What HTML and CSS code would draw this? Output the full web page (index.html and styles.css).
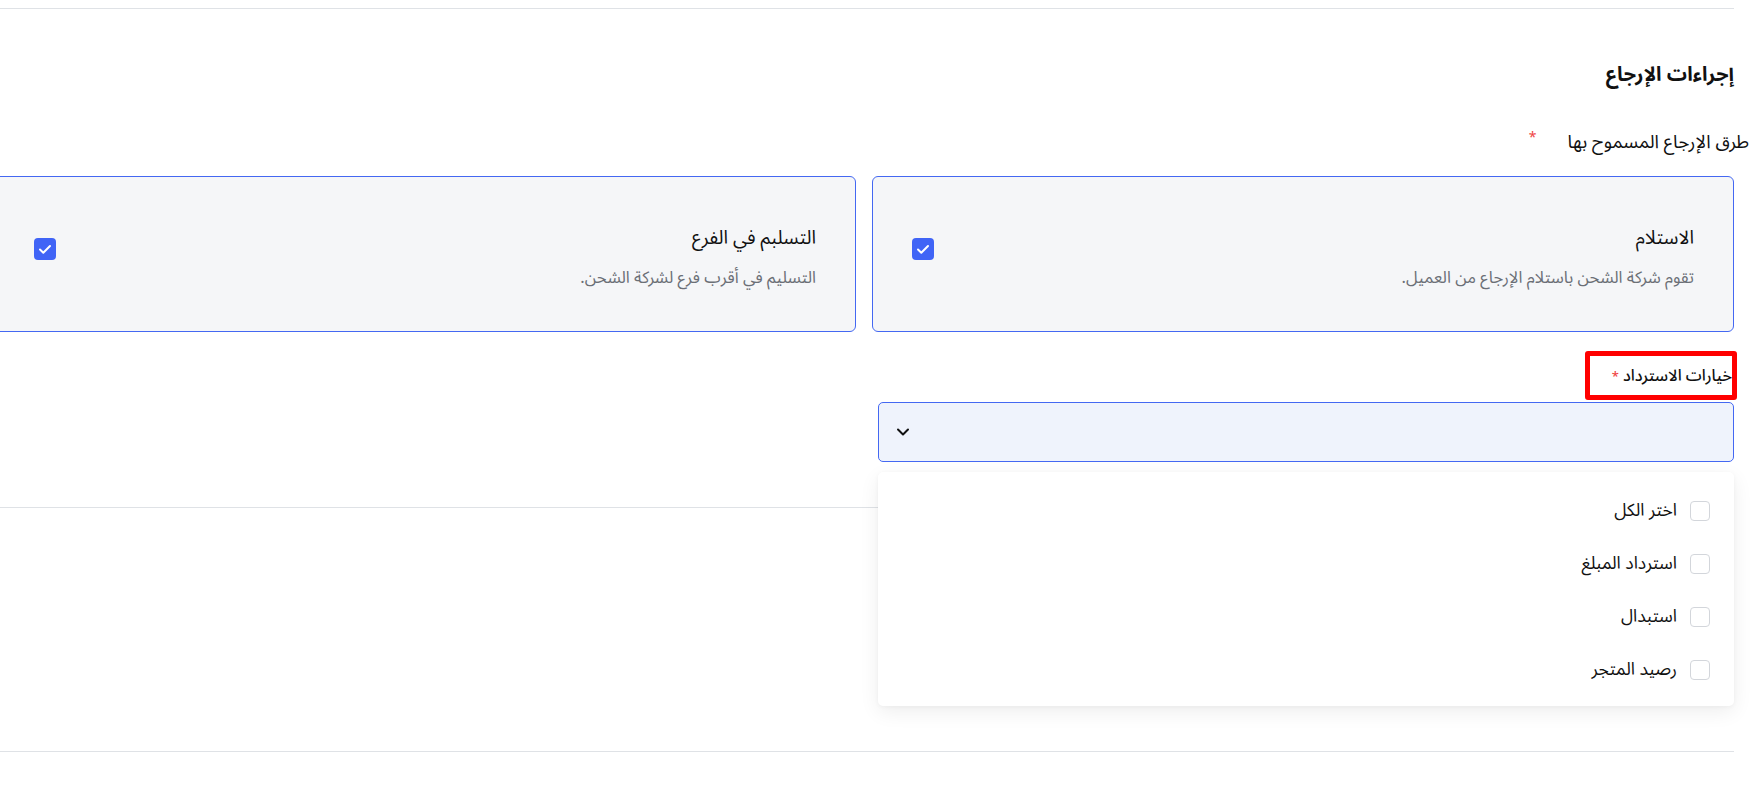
FILE: index.html
```html
<!DOCTYPE html>
<html lang="ar">
<head>
<meta charset="utf-8">
<title>إجراءات الإرجاع</title>
<link rel="stylesheet" href="styles.css">
</head>
<body>
<div class="page" dir="rtl">
  <div class="rule rule-top"></div>
  <section class="section">
    <h2 class="heading">إجراءات الإرجاع</h2>
    <div class="field-label"><span>طرق الإرجاع المسموح بها</span><span class="req">*</span></div>
    <div class="cards">
      <div class="card">
        <div class="card-text">
          <div class="card-title">الاستلام</div>
          <div class="card-desc">تقوم شركة الشحن باستلام الإرجاع من العميل.</div>
        </div>
        <span class="check checked"><svg viewBox="0 0 22 22" width="22" height="22"><path d="M6 11.5l3.3 3.2L16 8" fill="none" stroke="#fff" stroke-width="2" stroke-linecap="round" stroke-linejoin="round"/></svg></span>
      </div>
      <div class="card">
        <div class="card-text">
          <div class="card-title">التسلبم في الفرع</div>
          <div class="card-desc">التسليم في أقرب فرع لشركة الشحن.</div>
        </div>
        <span class="check checked"><svg viewBox="0 0 22 22" width="22" height="22"><path d="M6 11.5l3.3 3.2L16 8" fill="none" stroke="#fff" stroke-width="2" stroke-linecap="round" stroke-linejoin="round"/></svg></span>
      </div>
    </div>
    <div class="refund-label"><span class="marked">خيارات الاسترداد<span class="req2">*</span></span></div>
    <div class="select-wrap">
      <div class="select">
        <svg class="chev" viewBox="0 0 14 10" width="14" height="10"><path d="M2 2.5l5 5 5-5" fill="none" stroke="#111" stroke-width="2" stroke-linecap="round" stroke-linejoin="round"/></svg>
      </div>
      <div class="dropdown">
        <div class="opt"><span class="box"></span><span>اختر الكل</span></div>
        <div class="opt"><span class="box"></span><span>استرداد المبلغ</span></div>
        <div class="opt"><span class="box"></span><span>استبدال</span></div>
        <div class="opt"><span class="box"></span><span>رصيد المتجر</span></div>
      </div>
    </div>
  </section>
  <div class="rule rule-mid"></div>
  <div class="spacer"></div>
  <div class="rule"></div>
</div>
</body>
</html>
```
FILE: styles.css
```css
html, body {
  margin: 0;
  padding: 0;
  background: #fff;
}
body {
  font-family: "Noto Sans Arabic", "DejaVu Sans", "Noto Sans", sans-serif;
  color: #111;
  overflow: hidden;
}
.page {
  width: 1734px;
}
.rule {
  height: 0;
  border-top: 1px solid #dfe2e6;
}
.rule-top {
  margin-top: 8px;
}
.section {
  padding-top: 51px;
}
.heading {
  margin: 0;
  font-size: 20px;
  font-weight: 700;
  line-height: 30px;
  height: 30px;
}
.field-label {
  margin-top: 41px;
  margin-right: -15px;
  font-size: 18.5px;
  line-height: 24px;
  display: flex;
  align-items: center;
  gap: 31px;
}
.req {
  color: #ef4444;
  font-size: 14px;
  position: relative;
  top: -5px;
}
.cards {
  margin-top: 21px;
  display: grid;
  grid-template-columns: 862px 862px;
  gap: 16px;
}
.card {
  height: 156px;
  box-sizing: border-box;
  border: 1px solid #4468f2;
  border-radius: 6px;
  background: #f5f6f8;
  padding: 0 39px 0 39px;
  display: flex;
  align-items: center;
  justify-content: space-between;
}
.card-text {
  display: flex;
  flex-direction: column;
  gap: 16px;
  margin-top: 6px;
}
.card-title {
  font-size: 19px;
  line-height: 26px;
}
.card-desc {
  font-size: 16.6px;
  line-height: 22px;
  color: #6b6f76;
}
.check {
  width: 22px;
  height: 22px;
  border-radius: 4px;
  display: inline-flex;
  margin-top: -10px;
}
.check.checked {
  background: #4064f6;
}
.refund-label {
  margin-top: 19px;
  margin-right: -3px;
  display: flex;
}
.marked {
  display: inline-flex;
  align-items: center;
  height: 39px;
  border: 5px solid #ff0000;
  border-radius: 3px;
  padding: 0 0 0 22px;
  font-size: 16px;
  font-weight: 500;
  gap: 4px;
}
.req2 {
  color: #ef4444;
  font-size: 13px;
  order: 2;
  position: relative;
  top: 1px;
}
.select-wrap {
  position: relative;
  width: 856px;
  margin-top: 2px;
}
.select {
  height: 60px;
  box-sizing: border-box;
  border: 1px solid #4468f2;
  border-radius: 5px;
  background: #eff3fc;
  display: flex;
  align-items: center;
  justify-content: flex-end;
  padding-left: 17px;
}
.chev {
  display: block;
}
.dropdown {
  position: absolute;
  top: 70px;
  right: 0;
  left: 0;
  height: 234px;
  box-sizing: border-box;
  padding: 12px 24px 10px 24px;
  background: #fff;
  border-radius: 5px;
  box-shadow: 0 6px 20px rgba(0, 0, 0, 0.07), 0 1px 4px rgba(0, 0, 0, 0.04);
  z-index: 2;
}
.opt {
  height: 53px;
  display: flex;
  align-items: center;
  gap: 13px;
  font-size: 17.5px;
}
.box {
  width: 20px;
  height: 20px;
  box-sizing: border-box;
  border: 1px solid #d3d6db;
  border-radius: 4px;
  background: #fff;
}
.rule-mid {
  margin-top: 45px;
}
.spacer {
  height: 243px;
}
```
